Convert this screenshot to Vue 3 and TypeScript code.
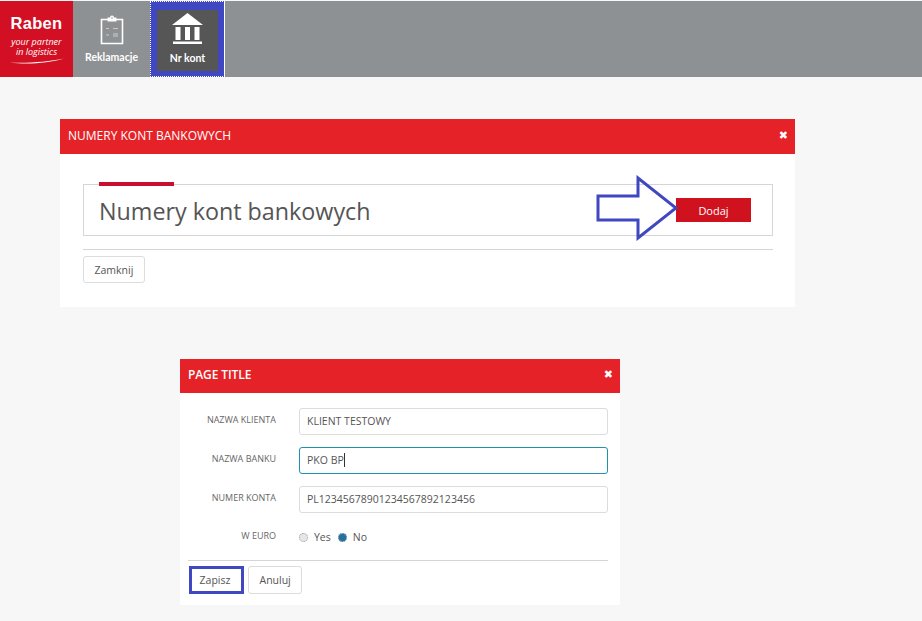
<template>
  <div class="page">
    <nav class="topbar">
      <div class="logo">
        <span class="logo-name">Raben</span>
        <span class="logo-tag">your partner<br />in logistics</span>
        <svg class="logo-swoosh" viewBox="0 0 54 6" width="54" height="6">
          <path d="M0 4.6C18 5.4 38 4 54 .6 38 5.6 16 6.6 0 4.6Z" fill="#fff" />
        </svg>
      </div>
      <a class="tile">
        <svg class="tile-icon" viewBox="0 0 24 30" width="24" height="30">
          <path d="M1.5 4.5h21v24h-21z" fill="none" stroke="#fff" stroke-width="1.6" />
          <path d="M7.5 2.5h9v4h-9z" fill="#fff" />
          <circle cx="12" cy="2.6" r="2" fill="#fff" />
          <circle cx="12" cy="3" r=".8" fill="#8e9193" />
          <path d="M6 13.5h3M13 13.5h5M6 20h3M13 19h5M13 21h5" stroke="#c9cbcc" stroke-width="1.1" fill="none" />
        </svg>
        <span>Reklamacje</span>
      </a>
      <a class="tile tile-active">
        <span class="tile-inner">
          <svg class="tile-icon" viewBox="0 0 31 31" width="31" height="31">
            <path d="M15.5 0 31 12H0Z" fill="#fff" />
            <path d="M3.5 14h5v13h-5zM13 14h5v13h-5zM22.5 14h5v13h-5z" fill="#fff" />
            <path d="M1 28.5h29V31H1z" fill="#fff" />
          </svg>
          <span>Nr kont</span>
        </span>
      </a>
    </nav>

    <section class="dialog dialog-list">
      <header class="dialog-head">
        <span>NUMERY KONT BANKOWYCH</span>
        <span class="dialog-close">&#10006;</span>
      </header>
      <div class="dialog-body">
        <div class="title-box">
          <h1>Numery kont bankowych</h1>
          <button class="btn-red" type="button">Dodaj</button>
          <svg class="arrow" viewBox="0 0 82 66" width="82" height="66">
            <path d="M2 21h40V3l38 30-38 30V45H2Z" fill="none" stroke="#3f48c0" stroke-width="3" />
          </svg>
        </div>
        <div class="dialog-foot">
          <button class="btn" type="button">Zamknij</button>
        </div>
      </div>
    </section>

    <section class="dialog dialog-form">
      <header class="dialog-head">
        <span class="page-title">PAGE TITLE</span>
        <span class="dialog-close">&#10006;</span>
      </header>
      <form class="form" @submit.prevent>
        <div v-for="f in fields" :key="f.label" class="row">
          <label>{{ f.label }}</label>
          <div class="input" :class="{ focused: f.focused }">
            {{ f.value }}<i v-if="f.focused" class="caret"></i>
          </div>
        </div>
        <div class="row row-radio">
          <label>W EURO</label>
          <div class="radios">
            <span class="radio"></span><span class="radio-text">Yes</span>
            <span class="radio radio-on"></span><span class="radio-text">No</span>
          </div>
        </div>
        <div class="form-foot">
          <button class="btn btn-marked" type="button">Zapisz</button>
          <button class="btn" type="button">Anuluj</button>
        </div>
      </form>
    </section>
  </div>
</template>

<script setup lang="ts">
interface Field {
  label: string;
  value: string;
  focused?: boolean;
}

const fields: Field[] = [
  { label: 'NAZWA KLIENTA', value: 'KLIENT TESTOWY' },
  { label: 'NAZWA BANKU', value: 'PKO BP', focused: true },
  { label: 'NUMER KONTA', value: 'PL12345678901234567892123456' }
];
</script>

<style>
html,
body {
  background: #f7f7f7;
}
</style>

<style scoped>
.page {
  width: 922px;
  height: 621px;
  overflow: hidden;
  padding-top: 1px;
  box-sizing: border-box;
  background: #f7f7f7;
  font-family: "Open Sans", sans-serif;
  color: #555;
}

.topbar {
  display: flex;
  height: 76px;
  background: #8e9193;
}

.logo {
  width: 73px;
  margin-right: 1px;
  background: #d30f24;
  color: #fff;
  display: flex;
  flex-direction: column;
  align-items: center;
  padding-top: 14px;
  box-sizing: border-box;
}

.logo-name {
  font-family: "Liberation Sans", sans-serif;
  font-weight: 700;
  font-size: 16.5px;
  line-height: 17px;
  letter-spacing: .3px;
}

.logo-tag {
  margin-top: 5px;
  font-family: "Open Sans", sans-serif;
  font-style: italic;
  font-size: 9px;
  line-height: 10px;
  text-align: center;
}

.logo-swoosh {
  margin-top: 1px;
}

.tile {
  width: 75px;
  margin-right: 1px;
  display: flex;
  flex-direction: column;
  align-items: center;
  padding-top: 14px;
  box-sizing: border-box;
  color: #fff;
  font-family: Lato, sans-serif;
  font-weight: 700;
  font-size: 10.5px;
  line-height: 12px;
}

.tile .tile-icon {
  margin-bottom: 6px;
}

.tile-active {
  border-right: 1px solid #fff;
  background: #3f48c0;
  outline: 1px dotted #fff;
  outline-offset: -1px;
  padding: 9px 6px 6px 7px;
}

.tile-inner {
  flex: 1;
  width: 100%;
  background: #565656;
  display: flex;
  flex-direction: column;
  align-items: center;
  padding-top: 3px;
  box-sizing: border-box;
}

.tile-active .tile-icon {
  margin-bottom: 8px;
}

.dialog {
  background: #fff;
}

.dialog-list {
  width: 735px;
  height: 188px;
  margin: 42px 0 0 60px;
}

.dialog-form {
  width: 440px;
  height: 246px;
  margin: 52px 0 0 180px;
}

.dialog-head {
  height: 35px;
  padding: 0 7px 2px 8px;
  box-sizing: border-box;
  background: #e52227;
  color: #fff;
  font-size: 12px;
  display: flex;
  align-items: center;
  justify-content: space-between;
}

.dialog-form .dialog-head {
  height: 34px;
  padding-bottom: 3px;
}

.dialog-close {
  font-size: 11px;
  font-family: "DejaVu Sans", sans-serif;
  font-weight: 700;
}

.page-title {
  letter-spacing: -.1px;
  font-weight: 600;
}

.dialog-body {
  padding: 30px 22px 0 23px;
}

.title-box {
  position: relative;
  height: 52px;
  box-sizing: border-box;
  border: 1px solid #d5d5d5;
  padding: 0 21px 0 15px;
  display: flex;
  align-items: center;
  justify-content: space-between;
}

.title-box::before {
  content: "";
  position: absolute;
  left: 15px;
  top: -3px;
  width: 75px;
  height: 4px;
  background: #c8102e;
}

.title-box h1 {
  margin: 0;
  padding-top: 1px;
  font-size: 23.3px;
  font-weight: 400;
  line-height: 50px;
  color: #555;
}

.arrow {
  position: absolute;
  left: 512px;
  top: -10px;
}

.btn-red {
  width: 75px;
  height: 24px;
  border: 0;
  padding: 0;
  background: #d0121f;
  color: #fff;
  font: 400 11px "Open Sans", sans-serif;
}

.dialog-foot {
  margin-top: 13px;
  padding-top: 6px;
  border-top: 1px solid #d5d5d5;
}

.btn {
  height: 27px;
  padding: 0 10.5px;
  border: 1px solid #dcdcdc;
  border-radius: 3px;
  background: #fff;
  color: #555;
  font: 400 10.5px "Open Sans", sans-serif;
}

.form {
  padding: 15px 12px 0 8px;
}

.row {
  display: flex;
  align-items: center;
  height: 27px;
  margin-bottom: 12px;
}

.row label {
  width: 88px;
  margin-right: 23px;
  text-align: right;
  font-size: 9px;
  line-height: 12px;
  color: #666;
  position: relative;
  top: -2px;
}

.input {
  flex: 1;
  height: 27px;
  box-sizing: border-box;
  border: 1px solid #dcdcdc;
  border-radius: 3px;
  padding: 0 7px;
  font-size: 10.5px;
  line-height: 25px;
  color: #555;
  white-space: nowrap;
}

.input.focused {
  border-color: #1f93ad;
}

.caret {
  display: inline-block;
  width: 1px;
  height: 14px;
  background: #333;
  vertical-align: -3px;
}

.row-radio {
  height: 24px;
  margin-bottom: 11px;
}

.row-radio label {
  top: -1px;
}

.radios {
  display: flex;
  align-items: center;
  font-size: 10.5px;
}

.radio {
  width: 7px;
  height: 7px;
  border: 1px dotted #999;
  border-radius: 50%;
  background: #e6e6e6;
}

.radio-on {
  margin-left: 7px;
  background: #2a6f9a;
  border-color: #9fc1d6;
}

.radio-text {
  margin-left: 6px;
}

.form-foot {
  display: flex;
  gap: 4px;
  padding-top: 5px;
  border-top: 1px solid #d5d5d5;
}

.form-foot .btn {
  height: 28px;
}

.btn-marked {
  width: 55px;
  padding: 0 3px 0 0;
  border: 3px solid #3f48c0;
  border-radius: 0;
  margin-left: 1px;
}
</style>
